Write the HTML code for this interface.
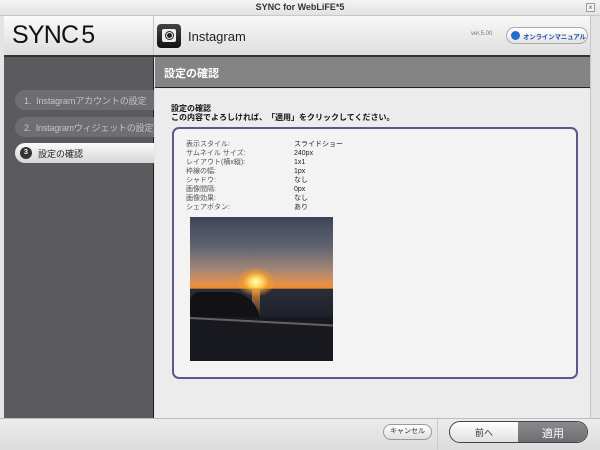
<!DOCTYPE html>
<html><head><meta charset="utf-8"><style>
*{margin:0;padding:0;box-sizing:border-box}
body{width:600px;height:450px;overflow:hidden;background:#e4e4e4;font-family:"Liberation Sans","Noto Sans CJK JP",sans-serif;position:relative}
.abs{position:absolute;white-space:nowrap}
.jp{font-family:"Liberation Sans","Noto Sans CJK JP",sans-serif}
</style></head><body>
<div class="abs" style="left:0;top:0;width:600px;height:16px;background:linear-gradient(#f4f4f4,#e2e2e2);border-bottom:1px solid #c8c8c8"></div>
<div class="abs" style="left:0;top:2px;width:600px;text-align:center;font-size:9px;font-weight:bold;color:#333">SYNC for WebLiFE*5</div>
<div class="abs" style="left:586px;top:3px;width:9px;height:9px;border:1px solid #999;font-size:8px;line-height:7px;text-align:center;color:#666;background:#f4f4f4">×</div>
<div class="abs" style="left:4px;top:16px;width:150px;height:40px;background:linear-gradient(#fafafa,#dcdcdc);border-right:1px solid #c4c4c4"></div>
<div class="abs" style="left:12px;top:21px;font-size:25px;color:#111;letter-spacing:-0.8px">SYNC<span style="margin-left:3px">5</span></div>
<div class="abs" style="left:154px;top:16px;width:436px;height:40px;background:linear-gradient(#f8f8f8,#dedede)"></div>
<div class="abs" style="left:157px;top:24px;width:24px;height:24px;border-radius:4px;background:linear-gradient(#444,#111)"></div>
<div class="abs" style="left:162px;top:29px;width:14px;height:13px;border-radius:2px;background:#eee"></div>
<div class="abs" style="left:166px;top:32px;width:7px;height:7px;border-radius:50%;background:#222;border:1.5px solid #eee;box-shadow:0 0 0 1px #222"></div>
<div class="abs" style="left:188px;top:29px;font-size:13px;color:#222">Instagram</div>
<div class="abs" style="left:471px;top:31px;font-size:6px;color:#777">ver.5.00</div>
<div class="abs" style="left:506px;top:27px;width:82px;height:17px;border-radius:9px;background:linear-gradient(#fff,#e4e4e4);border:1px solid #aaa"></div>
<div class="abs" style="left:511px;top:31px;width:9px;height:9px;border-radius:50%;background:#1f6fd0"></div>
<div class="abs jp" style="left:523px;top:31px;font-size:6.5px;color:#1f4fa0;font-weight:bold;letter-spacing:-0.2px">オンラインマニュアル</div>
<div class="abs" style="left:4px;top:55px;width:586px;height:2px;background:#333"></div>
<div class="abs" style="left:4px;top:57px;width:150px;height:361px;background:#5b5a5f;border-right:1px solid #222"></div>
<div class="abs jp" style="left:15px;top:90px;width:139px;height:20px;border-radius:10px 0 0 10px;background:#6e6d72;color:#c4c4c4;font-size:9px;padding:4px 0 0 9px;letter-spacing:-0.1px">1.&nbsp; Instagramアカウントの設定</div>
<div class="abs jp" style="left:15px;top:117px;width:139px;height:20px;border-radius:10px 0 0 10px;background:#6e6d72;color:#c4c4c4;font-size:9px;padding:4px 0 0 9px;letter-spacing:-0.2px">2.&nbsp; Instagramウィジェットの設定</div>
<div class="abs jp" style="left:15px;top:143px;width:139px;height:20px;border-radius:10px 0 0 10px;background:linear-gradient(#fafafa,#d6d6d6);color:#222;font-size:9px;padding:4px 0 0 23px">設定の確認</div>
<div class="abs" style="left:20px;top:147px;width:12px;height:12px;border-radius:50%;background:#333;color:#fff;font-size:7px;font-weight:bold;text-align:center;line-height:12px">3</div>
<div class="abs" style="left:155px;top:57px;width:435px;height:31px;background:#848484;border-bottom:1px solid #222"></div>
<div class="abs jp" style="left:164px;top:65px;font-size:11px;color:#fff;font-weight:bold">設定の確認</div>
<div class="abs" style="left:155px;top:89px;width:435px;height:329px;background:#ececec"></div>
<div class="abs jp" style="left:171px;top:104px;font-size:8px;line-height:9px;color:#111;font-weight:bold">設定の確認<br>この内容でよろしければ、「適用」をクリックしてください。</div>
<div class="abs" style="left:172px;top:127px;width:406px;height:252px;border:2px solid #5c5888;border-radius:7px;background:#f3f3f3"></div>
<div class="abs jp" style="left:186px;top:140px;font-size:7px;line-height:9px;color:#555">表示スタイル:<br>サムネイル サイズ:<br>レイアウト(横x縦):<br>枠線の幅:<br>シャドウ:<br>画像間隔:<br>画像効果:<br>シェアボタン:</div>
<div class="abs jp" style="left:294px;top:140px;font-size:7px;line-height:9px;color:#222">スライドショー<br>240px<br>1x1<br>1px<br>なし<br>0px<br>なし<br>あり</div>
<div class="abs" style="left:190px;top:217px;width:143px;height:144px;overflow:hidden;background:linear-gradient(#3c4558 0%,#5e6270 20%,#9c8478 35%,#e09050 46%,#f08a28 49.5%,#2a2e3a 50%,#1c2028 70%,#141820 100%)">
<div class="abs" style="left:46px;top:50px;width:40px;height:30px;border-radius:50%;background:radial-gradient(#fffbd0 0%,#ffe060 20%,rgba(250,160,40,0.6) 45%,rgba(250,150,40,0) 70%)"></div>
<div class="abs" style="left:62px;top:73px;width:8px;height:28px;background:linear-gradient(rgba(240,150,60,.8),rgba(240,150,60,0))"></div>
<div class="abs" style="left:0;top:75px;width:70px;height:40px;background:#121216;border-radius:10px 30px 0 0"></div>
<div class="abs" style="left:0;top:100px;width:143px;height:44px;background:#17191f"></div>
<div class="abs" style="left:0;top:100px;width:143px;height:1.5px;background:#6a6060;transform:rotate(3deg);transform-origin:left"></div>
</div>
<div class="abs" style="left:0;top:418px;width:600px;height:32px;background:linear-gradient(#ececec,#dcdcdc);border-top:1px solid #bbb"></div>
<div class="abs" style="left:437px;top:419px;width:1px;height:31px;background:#ccc"></div>
<div class="abs jp" style="left:383px;top:424px;width:49px;height:16px;border-radius:8px;border:1px solid #999;background:linear-gradient(#fff,#e0e0e0);font-size:7px;text-align:center;line-height:14px;color:#333">キャンセル</div>
<div class="abs" style="left:449px;top:421px;width:139px;height:22px;border-radius:11px;border:1.5px solid #444;overflow:hidden;background:linear-gradient(#fff,#e0e0e0)">
<div class="abs" style="left:68px;top:0;width:72px;height:22px;background:linear-gradient(#8a8a8e,#6a6a70)"></div>
<div class="abs jp" style="left:0;top:4px;width:68px;text-align:center;font-size:9px;color:#333">前へ</div>
<div class="abs jp" style="left:68px;top:3px;width:70px;text-align:center;font-size:11px;color:#fff">適用</div>
</div>
<div class="abs" style="left:590px;top:16px;width:10px;height:402px;background:#e4e4e4;border-left:1px solid #c4c4c4"></div>
</body></html>
